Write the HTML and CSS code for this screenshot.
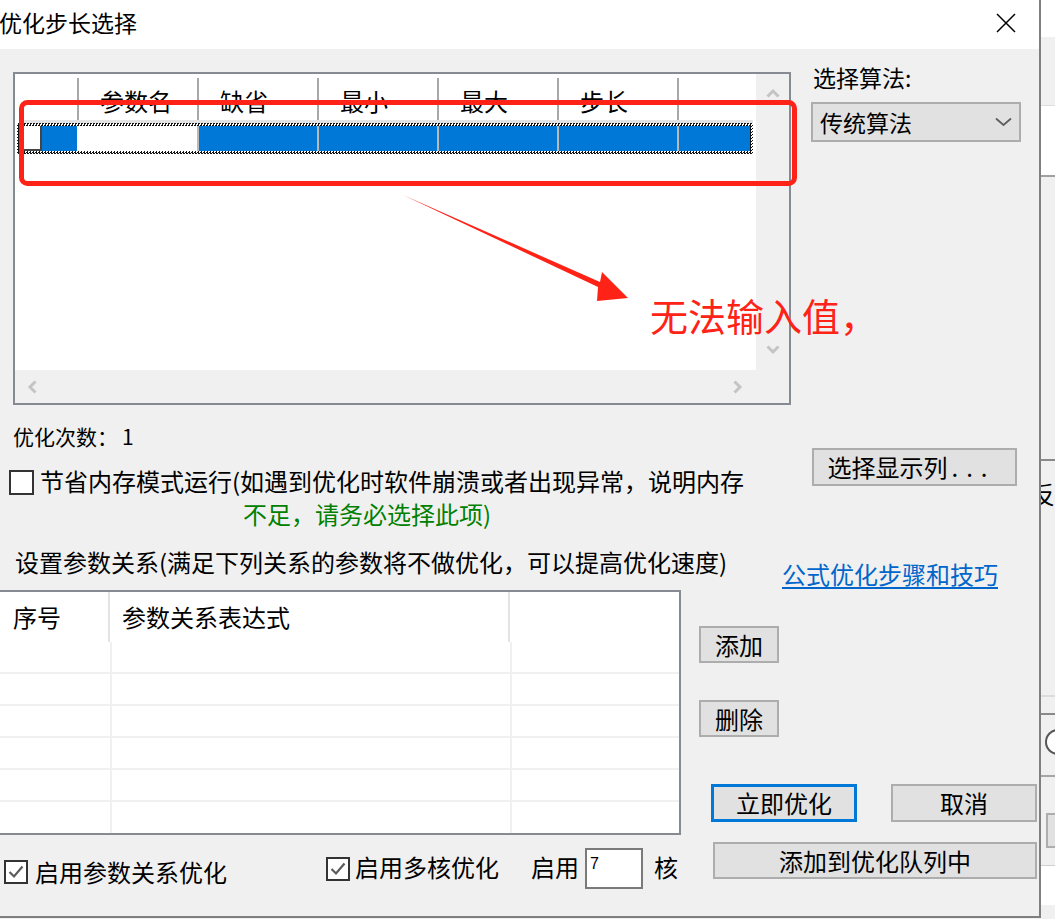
FILE: index.html
```html
<!DOCTYPE html>
<html lang="zh-CN">
<head>
<meta charset="utf-8">
<title>优化步长选择</title>
<link rel="stylesheet" href="styles.css">
</head>
<body>
<div class="screen">
  <div class="dialog">
    <div class="titlebar">
      <span class="title">优化步长选择</span>
      <svg class="close" width="20" height="20" viewBox="0 0 20 20"><path d="M1 1 L19 19 M19 1 L1 19" stroke="#000" stroke-width="1.5" fill="none"/></svg>
    </div>
    <div class="body">
      <div class="top">
        <div class="listview">
          <div class="lv-content">
            <div class="lv-header">
              <div class="hc c1"></div>
              <div class="hc">参数名</div>
              <div class="hc">缺省</div>
              <div class="hc">最小</div>
              <div class="hc">最大</div>
              <div class="hc">步长</div>
              <div class="hc c7"></div>
            </div>
            <div class="lv-row">
              <div class="rc c1"><span class="rbox"></span></div>
              <div class="rc c2"></div>
              <div class="rc cs"></div>
              <div class="rc cs"></div>
              <div class="rc cs"></div>
              <div class="rc cs"></div>
              <div class="rc c7"></div>
            </div>
          </div>
          <div class="vscroll">
            <svg width="14" height="10" viewBox="0 0 14 10"><polyline points="1.5,8.5 7,3 12.5,8.5" fill="none" stroke="#c4c4c4" stroke-width="3"/></svg>
            <svg width="14" height="10" viewBox="0 0 14 10"><polyline points="1.5,1.5 7,7 12.5,1.5" fill="none" stroke="#c4c4c4" stroke-width="3"/></svg>
          </div>
          <div class="hscroll">
            <svg width="10" height="14" viewBox="0 0 10 14"><polyline points="8.5,1.5 3,7 8.5,12.5" fill="none" stroke="#c4c4c4" stroke-width="3"/></svg>
            <svg width="10" height="14" viewBox="0 0 10 14"><polyline points="1.5,1.5 7,7 1.5,12.5" fill="none" stroke="#c4c4c4" stroke-width="3"/></svg>
          </div>
          <div class="corner"></div>
        </div>
        <div class="algo">
          <div class="algo-label">选择算法:</div>
          <div class="combo">
            <span>传统算法</span>
            <svg width="17" height="10" viewBox="0 0 17 10"><polyline points="1,1.5 8.5,8 16,1.5" fill="none" stroke="#5f5f5f" stroke-width="1.8"/></svg>
          </div>
        </div>
      </div>

      <div class="mid">
        <div class="mid-left">
          <div class="count">优化次数：<span class="num">1</span></div>
          <div class="chkline"><span class="cbox"></span><span class="lbl">节省内存模式运行(如遇到优化时软件崩溃或者出现异常，说明内存</span></div>
          <div class="green">不足，请务必选择此项)</div>
          <div class="relation">设置参数关系(满足下列关系的参数将不做优化，可以提高优化速度)</div>
        </div>
        <div class="mid-right">
          <div class="btn btn-cols">选择显示列<span class="dots">...</span></div>
          <a class="link">公式优化步骤和技巧</a>
        </div>
      </div>

      <div class="lower">
        <div class="lower-left">
          <div class="grid2">
            <div class="g-head">
              <div class="gh k1">序号</div>
              <div class="gh k2">参数关系表达式</div>
              <div class="gh k3"></div>
            </div>
            <div class="g-row"><div class="gc k1"></div><div class="gc k2"></div><div class="gc k3"></div></div>
            <div class="g-row"><div class="gc k1"></div><div class="gc k2"></div><div class="gc k3"></div></div>
            <div class="g-row"><div class="gc k1"></div><div class="gc k2"></div><div class="gc k3"></div></div>
            <div class="g-row"><div class="gc k1"></div><div class="gc k2"></div><div class="gc k3"></div></div>
            <div class="g-row"><div class="gc k1"></div><div class="gc k2"></div><div class="gc k3"></div></div>
            <div class="g-row"><div class="gc k1"></div><div class="gc k2"></div><div class="gc k3"></div></div>
          </div>
          <div class="bottomrow">
            <div class="cb-item cb1">
              <span class="cbox sm"><svg width="20" height="20" viewBox="0 0 20 20"><polyline points="3.5,10 8,14.5 16.5,4.5" fill="none" stroke="#5b5b5b" stroke-width="2.2"/></svg></span>
              <span class="cb-lbl">启用参数关系优化</span>
            </div>
            <div class="cb-item cb2">
              <span class="cbox sm"><svg width="20" height="20" viewBox="0 0 20 20"><polyline points="3.5,10 8,14.5 16.5,4.5" fill="none" stroke="#5b5b5b" stroke-width="2.2"/></svg></span>
              <span class="cb-lbl2">启用多核优化</span>
            </div>
            <div class="qiyong">启用</div>
            <div class="cores">7</div>
            <div class="he">核</div>
          </div>
        </div>
        <div class="lower-right">
          <div class="btn btn-sm b-add">添加</div>
          <div class="btn btn-sm b-del">删除</div>
          <div class="btnrow">
            <div class="btn b-go">立即优化</div>
            <div class="btn b-cancel">取消</div>
          </div>
          <div class="btn b-queue">添加到优化队列中</div>
        </div>
      </div>
    </div>

    <svg class="annot" width="1041" height="919" viewBox="0 0 1041 919">
      <rect x="21.5" y="102.5" width="773" height="81" rx="6" ry="6" fill="none" stroke="#fe2217" stroke-width="5"/>
      <polygon points="403,195 600,282 602,272 628,298 597,301 598,287" fill="#fe2217"/>
    </svg>
    <div class="annot-text">无法输入值，</div>
  </div>

  <div class="bgstrip">
    <div class="s1"></div>
    <div class="s2"></div>
    <div class="s3"></div>
    <div class="s4"></div>
    <div class="s5"><span>反</span></div>
    <div class="s6"></div>
    <div class="s7"><span class="radio"></span></div>
    <div class="s8"><span class="sbox"></span></div>
    <div class="s9"></div>
    <div class="s10"></div>
  </div>
</div>
</body>
</html>
```

FILE: styles.css
```css
* { box-sizing: border-box; }
html, body { margin: 0; padding: 0; }
body {
  width: 1055px;
  height: 919px;
  overflow: hidden;
  background: #f0f0f0;
  font-family: "Noto Sans CJK SC", "Noto Sans", sans-serif;
  font-size: 24px;
  line-height: 24px;
  color: #000;
}
.screen { display: flex; width: 1055px; height: 919px; }

.dialog {
  position: relative;
  width: 1041px;
  height: 918px;
  flex: none;
  border-right: 2px solid #7f7f7f;
  display: flex;
  flex-direction: column;
}
.titlebar {
  flex: none;
  height: 49px;
  background: #fff;
  display: flex;
  justify-content: space-between;
  align-items: flex-start;
  padding-top: 10px;
}
.title { font-size: 23px; margin-left: -1px; }
.close { margin-top: 3px; margin-right: 23px; }

.body {
  flex: 1;
  background: #f0f0f0;
  border-bottom: 2px solid #7f7f7f;
  display: flex;
  flex-direction: column;
}

/* top section */
.top { display: flex; height: 356px; flex: none; }
.listview {
  margin: 23px 0 0 13px;
  width: 778px;
  height: 333px;
  border: 2px solid #868a91;
  background: #fff;
  display: grid;
  grid-template-columns: 741px 33px;
  grid-template-rows: 296px 33px;
  flex: none;
}
.lv-content { padding-top: 4px; overflow: hidden; background: #fff; }
.lv-header {
  display: flex;
  margin-left: 5px;
  width: 733px;
  height: 45px;
  border-bottom: 3px solid #e3e3e3;
}
.hc {
  flex: none;
  width: 120px;
  height: 42px;
  line-height: 42px;
  border-left: 2px solid #a8a8a8;
  padding-left: 21px;
  padding-top: 2px;
  background: #fff;
}
.hc.c1 { width: 57px; border-left: none; padding: 0; }
.hc.c7 { width: 76px; }
.lv-row {
  display: flex;
  margin-left: 2px;
  width: 736px;
  height: 31px;
  padding: 3px;
  background: repeating-conic-gradient(#111 0 25%, #fff 0 50%) 0 0 / 3px 3px;
}
.rc { flex: none; height: 25px; background: #0078d7; }
.rc.c1 { width: 57px; display: flex; }
.rbox {
  width: 22px;
  height: 25px;
  background: #fff;
  border-right: 2px solid #444;
  border-bottom: 2px solid #444;
}
.rc.c2 { width: 120px; background: #fff; }
.rc.cs { width: 120px; border-left: 2px solid #b9b9b9; }
.rc.c7 { width: 73px; border-left: 2px solid #b9b9b9; }

.vscroll {
  background: #f0f0f0;
  display: flex;
  flex-direction: column;
  align-items: center;
  justify-content: space-between;
  padding: 14px 0 15px 0;
}
.hscroll {
  background: #f0f0f0;
  display: flex;
  align-items: center;
  justify-content: space-between;
  padding: 0 13px 0 12px;
}
.corner { background: #f0f0f0; }

.algo { margin: 16px 0 0 20px; width: 210px; flex: none; }
.algo-label { font-size: 23px; margin-left: 2px; height: 24px; }
.combo {
  margin-top: 13px;
  height: 40px;
  border: 2px solid #adadad;
  background: #e1e1e1;
  display: flex;
  align-items: center;
  justify-content: space-between;
  padding: 0 7px;
  font-size: 23px;
}

/* middle */
.mid { display: flex; height: 185px; flex: none; }
.mid-left { width: 770px; flex: none; }
.count { font-size: 21px; margin: 19px 0 0 13px; height: 24px; white-space: nowrap; }
.count .num { margin-left: 4px; }
.chkline { display: flex; margin: 21px 0 0 9px; height: 26px; white-space: nowrap; }
.cbox {
  flex: none;
  width: 25px;
  height: 25px;
  border: 2px solid #333;
  background: #fff;
  margin-top: 1px;
  display: block;
}
.cbox.sm { width: 24px; height: 24px; margin-top: 0; }
.cbox svg { display: block; }
.chkline .lbl { margin-left: 6px; }
.green { margin: 7px 0 0 243px; color: #008000; height: 24px; }
.relation { margin: 24px 0 0 15px; white-space: nowrap; }
.mid-right { flex: 1; }
.btn {
  display: flex;
  align-items: center;
  justify-content: center;
  background: #e1e1e1;
  border: 2px solid #adadad;
  white-space: nowrap;
}
.btn-cols { margin: 43px 0 0 42px; width: 205px; height: 38px; padding-right: 6px; }
.dots { letter-spacing: 8px; margin-left: 4px; }
.link {
  display: block;
  margin: 76px 0 0 12px;
  color: #0066cc;
  text-decoration: underline;
  text-underline-offset: 3px;
  white-space: nowrap;
}

/* lower */
.lower { display: flex; flex: 1; }
.lower-left { width: 681px; flex: none; }
.grid2 {
  height: 245px;
  border: 2px solid #868a91;
  border-left: none;
  background: #fff;
}
.g-head { display: flex; height: 50px; }
.gh { line-height: 50px; border-right: 2px solid #e3e3e3; flex: none; }
.gh.k1 { width: 110px; padding-left: 13px; }
.gh.k2 { width: 400px; padding-left: 12px; }
.gh.k3 { flex: 1; border-right: none; }
.g-row { display: flex; height: 32px; border-bottom: 2px solid #f0f0f0; }
.g-row:last-child { border-bottom: none; height: 31px; }
.gc { flex: none; border-right: 2px solid #f0f0f0; }
.gc.k1 { width: 112px; }
.gc.k2 { width: 400px; }
.gc.k3 { flex: 1; border-right: none; }

.bottomrow { display: flex; align-items: flex-start; white-space: nowrap; }
.cb-item { display: flex; align-items: flex-start; }
.cb1 { margin: 25px 0 0 4px; }
.cb1 .cb-lbl { margin-left: 7px; }
.cb2 { margin: 20px 0 0 99px; }
.cb2 .cbox { margin-top: 2px; }
.cb-lbl2 { margin-left: 5px; }
.qiyong { margin: 20px 0 0 32px; }
.cores {
  margin: 13px 0 0 6px;
  width: 58px;
  height: 41px;
  border: 2px solid #7a7a7a;
  background: #fff;
  font-family: "Liberation Sans", sans-serif;
  font-size: 16px;
  line-height: 16px;
  padding: 6px 0 0 3px;
}
.he { margin: 20px 0 0 11px; }

.lower-right { flex: 1; display: flex; flex-direction: column; align-items: flex-start; }
.btn-sm { width: 80px; height: 37px; margin-left: 18px; }
.b-add { margin-top: 36px; }
.b-del { margin-top: 37px; }
.btnrow { display: flex; margin-top: 47px; }
.b-go { margin-left: 30px; width: 146px; height: 38px; border: 3px solid #0078d7; }
.b-cancel { margin-left: 34px; width: 146px; height: 38px; }
.b-queue { margin: 20px 0 0 32px; width: 324px; height: 37px; }

/* annotations */
.annot { position: absolute; left: 0; top: 0; pointer-events: none; }
.annot-text {
  position: absolute;
  left: 650px;
  top: 296px;
  font-size: 38px;
  line-height: 38px;
  color: #fe2217;
  white-space: nowrap;
}

/* window behind */
.bgstrip {
  flex: 1;
  display: flex;
  flex-direction: column;
  overflow: hidden;
  background: #f0f0f0;
}
.bgstrip > div { flex: none; }
.s1 { height: 37px; background: #fff; }
.s2 { height: 68px; }
.s3 { height: 70px; background: #fff; border-top: 1px solid #dedede; }
.s4 { height: 284px; border-top: 2px solid #a0a0a0; }
.s5 { height: 236px; border-top: 2px solid #8a8a8a; padding-top: 21px; white-space: nowrap; font-size: 14px; line-height: 24px; }
.s5 span { display: block; font-size: 24px; margin-left: -10px; width: 24px; }
.s6 { height: 18px; border-top: 2px solid #dcdcdc; }
.s7 { height: 62px; border-top: 2px solid #8a8a8a; padding: 14px 0 0 4px; }
.radio { display: block; width: 26px; height: 26px; border: 2px solid #555; border-radius: 50%; background: #fff; }
.s8 { height: 90px; border-top: 2px solid #a5a5a5; padding: 36px 0 0 5px; }
.sbox { display: block; width: 40px; height: 35px; border: 2px solid #adadad; background: #e1e1e1; }
.s9 { height: 40px; background: #fff; border-top: 1px solid #d0d0d0; }
.s10 { flex: 1; }
```
